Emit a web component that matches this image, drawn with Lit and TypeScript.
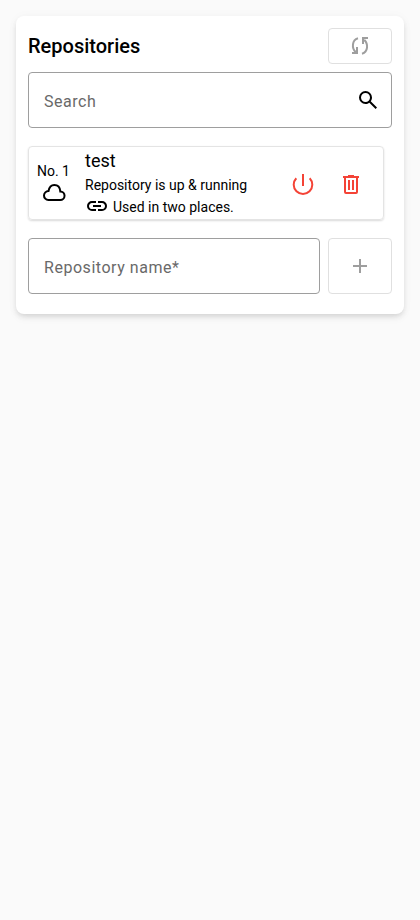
import { LitElement, html, css, svg } from "lit";
import { customElement } from "lit/decorators.js";

const SEARCH = "M784-120 532-372q-30 24-69 38t-83 14q-109 0-184.5-75.5T120-580q0-109 75.5-184.5T380-840q109 0 184.5 75.5T640-580q0 44-14 83t-38 69l252 252-56 56ZM380-400q75 0 127.5-52.5T560-580q0-75-52.5-127.5T380-760q-75 0-127.5 52.5T200-580q0 75 52.5 127.5T380-400Z";
const LINK = "M440-280H280q-83 0-141.5-58.5T80-480q0-83 58.5-141.5T280-680h160v80H280q-50 0-85 35t-35 85q0 50 35 85t85 35h160v80ZM320-440v-80h320v80H320Zm200 160v-80h160q50 0 85-35t35-85q0-50-35-85t-85-35H520v-80h160q83 0 141.5 58.5T880-480q0 83-58.5 141.5T680-280H520Z";

const SYNC = "M10 4.200C3.800 6 3.600 14 7.600 18M4 19h5v-6M8 16.500v2M14 19.800C20.200 18 20.400 10 16.400 6M20 4h-5v6M16 7.500v-2";
const CLOUD = "M6.400 20A4.450 4.450 0 0 1 6.500 11.100C7.200 7.300 9.200 5 12.300 5C15.600 5 18 7.500 18.300 11.400A4.300 4.300 0 0 1 18.200 20Z";
const POWER = "M12 2v12M5.300 6.200a9.300 9.300 0 1 0 13.400 0";
const TRASH = "M4 5h16M9 4h6M6 5v15q0 1 1 1h10q1 0 1-1V5M10 8v10M14 8v10";
const PLUS = "M5 12h14M12 5v14";

const filled = (d: string) => html`<svg width="24" height="24" viewBox="0 -960 960 960" fill="currentColor">${svg`<path d=${d}></path>`}</svg>`;
const stroked = (d: string) => html`<svg width="24" height="24" viewBox="0 0 24 24" fill="none" stroke="currentColor" stroke-width="2">${svg`<path d=${d}></path>`}</svg>`;

@customElement("app-root")
export class AppRoot extends LitElement {
  static styles = css`
    :host { display: block; box-sizing: border-box; min-height: 100vh; padding: 16px; background: #fafafa; color: #000; font-family: Roboto, sans-serif; }
    * { box-sizing: border-box; }
    svg { display: block; flex: none; }
    .card { height: 298px; padding: 12px; display: flex; flex-direction: column; background: #fff; border-radius: 8px; box-shadow: 0 3px 5px -1px rgba(0,0,0,.1), 0 4px 8px rgba(0,0,0,.05), 0 1px 12px rgba(0,0,0,.03); }
    .header { display: flex; justify-content: space-between; align-items: center; height: 36px; }
    h1 { margin: 0; font-size: 20px; font-weight: 500; line-height: 32px; }
    button { display: flex; align-items: center; justify-content: center; margin: 0; padding: 0; border: 0; background: none; color: inherit; font: inherit; }
    .outlined { width: 64px; height: 36px; border: 1px solid #e0e0e0; border-radius: 4px; color: #9e9e9e; }
    .header .outlined { padding-bottom: 1px; }
    .field { display: flex; align-items: center; justify-content: space-between; height: 56px; padding: 2px 11px 0 15px; border: 1px solid #9e9e9e; border-radius: 4px; color: #696969; font-size: 16px; letter-spacing: .54px; }
    .field svg { color: #000; margin-top: -2px; }
    .search { margin-top: 8px; }
    .item { display: flex; width: 356px; height: 74px; margin-top: 18px; border: 1px solid #e4e4e4; border-radius: 4px; box-shadow: 0 1px 2px rgba(0,0,0,.15); }
    .number { width: 49px; display: flex; flex-direction: column; align-items: center; padding-top: 14px; font-size: 14px; line-height: 21px; }
    .number svg { margin-top: -2px; }
    .details { flex: 1; padding: 2px 0 0 7px; font-size: 14px; line-height: 22px; white-space: nowrap; }
    .name { height: 25px; font-size: 18px; line-height: 24px; }
    .usage { display: flex; align-items: center; gap: 4px; height: 22px; }
    .usage svg { margin-top: -2px; }
    .actions { display: flex; align-items: center; color: #f44336; padding: 2px 8px 0 0; }
    .actions button { width: 48px; height: 48px; }
    .create { display: grid; grid-template-columns: 1fr 64px; gap: 8px; margin-top: 18px; }
    .add { height: 56px; }
  `;

  render() {
    return html`
      <section class="card">
        <div class="header">
          <h1>Repositories</h1>
          <button class="outlined" aria-label="Refresh" disabled>${stroked(SYNC)}</button>
        </div>
        <div class="field search"><span>Search</span>${filled(SEARCH)}</div>
        <div class="item">
          <div class="number"><span>No. 1</span>${stroked(CLOUD)}</div>
          <div class="details">
            <div class="name">test</div>
            <div>Repository is up &amp; running</div>
            <div class="usage">${filled(LINK)}<span>Used in two places.</span></div>
          </div>
          <div class="actions">
            <button aria-label="Stop">${stroked(POWER)}</button>
            <button aria-label="Delete">${stroked(TRASH)}</button>
          </div>
        </div>
        <div class="create">
          <div class="field"><span>Repository name*</span></div>
          <button class="outlined add" aria-label="Add repository" disabled>${stroked(PLUS)}</button>
        </div>
      </section>`;
  }
}
